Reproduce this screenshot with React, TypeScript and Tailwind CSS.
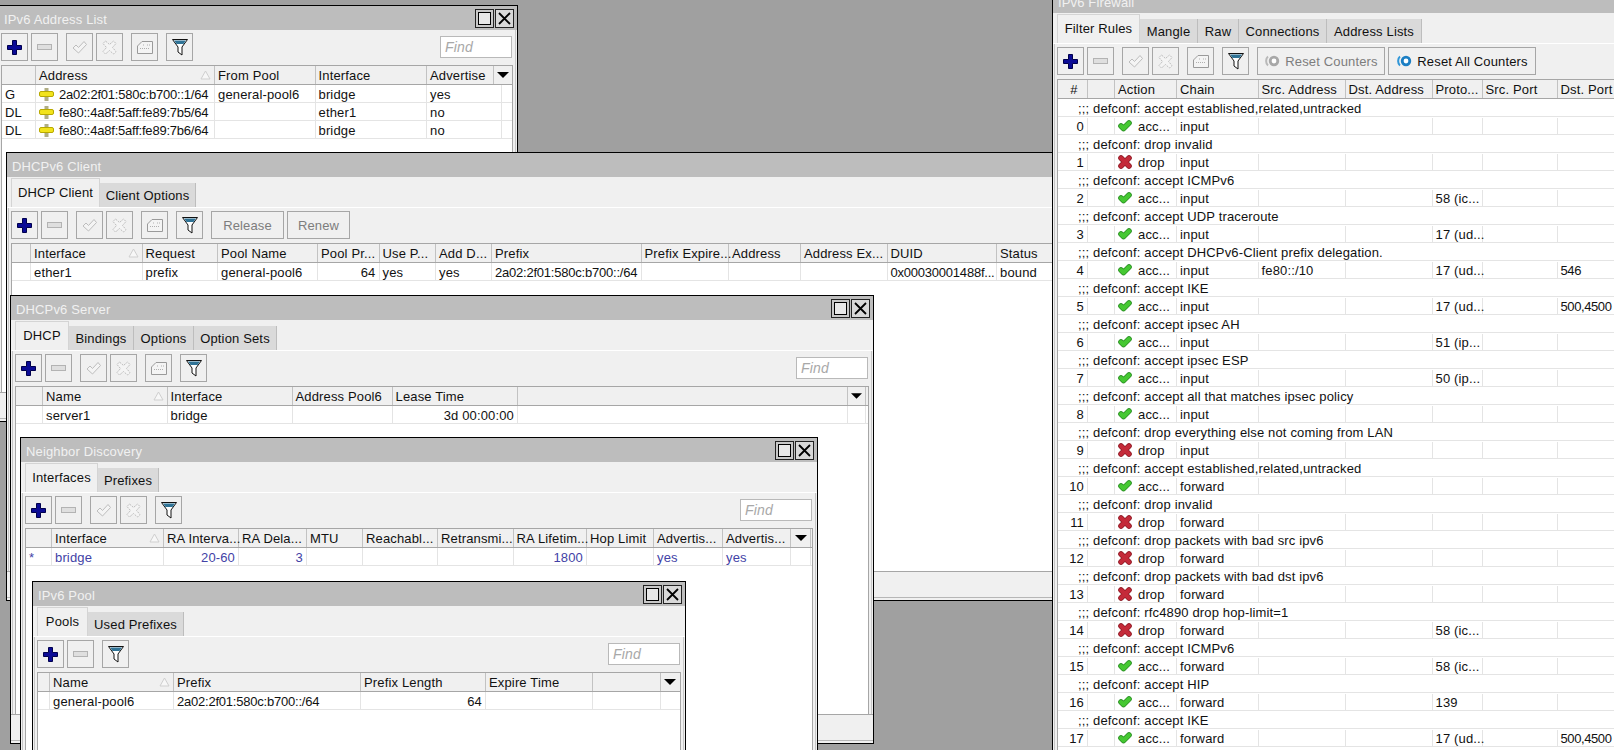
import type { ReactNode } from 'react';

type IconKind = 'add' | 'remove' | 'enable' | 'disable' | 'comment' | 'filter';

const Plus = () => (
  <svg width="15" height="15" viewBox="0 0 15 15">
    <path d="M5.500 .5h4v5h5v4h-5v5h-4v-5h-5v-4h5z" fill="#0b0b96" stroke="#00004e" />
  </svg>
);

const Minus = () => (
  <svg width="15" height="6" viewBox="0 0 15 6">
    <rect x=".5" y=".5" width="14" height="5" fill="#dfdfdf" stroke="#b3b3b3" />
  </svg>
);

const CheckOff = () => (
  <svg width="15" height="14" viewBox="0 0 15 14">
    <path d="M1 8l3-3 2.500 2.500L12 1.500l2.500 3L6.500 13z" fill="#f4f4f4" stroke="#bdbdbd" />
  </svg>
);

const CrossOff = () => (
  <svg width="15" height="15" viewBox="0 0 15 15">
    <path d="M3.500 1l4 3.500 4-3.500 2.500 2.500-3.500 4 3.500 4-2.500 2.500-4-3.500-4 3.500L1 11.500l3.500-4L1 3.500z" fill="#f4f4f4" stroke="#bdbdbd" strokeDasharray="2 1" />
  </svg>
);

const NoteOff = () => (
  <svg width="16" height="13" viewBox="0 0 16 13">
    <path d="M5 .5h10.500v12H.5V5z" fill="#f4f4f4" stroke="#9a9a9a" />
    <path d="M6 4h2M10 4h3M3 7.500h10" stroke="#b0b0b0" strokeDasharray="1 1" />
  </svg>
);

const Funnel = () => (
  <svg width="16" height="17" viewBox="0 0 16 17">
    <path d="M.5 .5h15L10 8v8l-4-3V8z" fill="#fff" stroke="#111" />
    <path d="M2 1.500h12L11.500 5h-7z" fill="#2f7396" />
  </svg>
);

const GreenCheck = () => (
  <svg width="14" height="12" viewBox="0 0 14 12" className="shrink-0">
    <path d="M3 6L5.500 8.500 11 3" fill="none" stroke="#2b8f24" strokeWidth="5.600" strokeLinecap="round" strokeLinejoin="round" />
    <path d="M3 6L5.500 8.500 11 3" fill="none" stroke="#45c832" strokeWidth="4" strokeLinecap="round" strokeLinejoin="round" />
  </svg>
);

const RedCross = () => (
  <svg width="14" height="14" viewBox="0 0 14 14" className="shrink-0">
    <path d="M3 3L11 11M11 3L3 11" fill="none" stroke="#8f1a25" strokeWidth="5.600" strokeLinecap="round" />
    <path d="M3 3L11 11M11 3L3 11" fill="none" stroke="#c42a39" strokeWidth="4" strokeLinecap="round" />
  </svg>
);

const AddressPin = () => (
  <svg width="15" height="13" viewBox="0 0 15 13" className="shrink-0">
    <rect x="5.500" y="0" width="4" height="13" fill="#b0ae84" />
    <rect x=".5" y="3.500" width="14" height="5" rx="1.500" fill="#f2e31b" stroke="#b8a900" />
  </svg>
);

const SortUp = () => (
  <svg width="11" height="10" viewBox="0 0 11 10" className="absolute right-[3px] top-[4px]">
    <path d="M5.500 1L1 9h9z" fill="#f7f7f7" stroke="#cfcfcf" />
  </svg>
);

const DropArrow = () => (
  <svg width="12" height="6" viewBox="0 0 12 6">
    <path d="M0 0h12L6 6z" fill="#000" />
  </svg>
);

function ResetIcon({ off }: { off?: boolean }) {
  const c = off ? '#a8a8a8' : '#1c7fc4';
  return (
    <svg width="16" height="12" viewBox="0 0 16 12" className="shrink-0">
      <path d="M4 1.500C1.500 3.500 1.500 8.500 4 10.500" fill="none" stroke={off ? '#b8b8b8' : '#2f96d8'} strokeWidth="2" />
      <circle cx="10" cy="6" r="3.800" fill="#fff" stroke={c} strokeWidth="2.800" />
    </svg>
  );
}

function ToolBtn({ kind }: { kind: IconKind }) {
  const ml = kind === 'enable' || kind === 'comment' || kind === 'filter' ? 'ml-[5px]' : '';
  return (
    <div className={`flex h-[28px] w-[27px] items-center justify-center border border-[#a6a6a6] bg-[#f0f0f0] ${ml}`}>
      {kind === 'add' && <Plus />}
      {kind === 'remove' && <Minus />}
      {kind === 'enable' && <CheckOff />}
      {kind === 'disable' && <CrossOff />}
      {kind === 'comment' && <NoteOff />}
      {kind === 'filter' && <Funnel />}
    </div>
  );
}

function TextBtn({ className, off, icon, children }: { className: string; off?: boolean; icon?: ReactNode; children: ReactNode }) {
  return (
    <div className={`flex h-[28px] items-center justify-center gap-[5px] border border-[#a6a6a6] bg-[#f0f0f0] ${off ? 'text-[#7d7d7d]' : 'text-[#111]'} ${className}`}>
      {icon}
      {children}
    </div>
  );
}

const FindBox = () => (
  <div className="ml-auto mr-[1px] flex h-[22px] w-[72px] shrink-0 items-center border border-[#b9b9b9] bg-white pl-[4px] text-[14px] italic text-[#a8a8a8]">
    Find
  </div>
);

function Toolbar({ kinds, find, children }: { kinds: IconKind[]; find?: boolean; children?: ReactNode }) {
  return (
    <div className="flex h-[28px] shrink-0 items-center gap-[3px]">
      {kinds.map((k) => (
        <ToolBtn key={k} kind={k} />
      ))}
      {children}
      {find && <FindBox />}
    </div>
  );
}

type Tab = [string, string];

function Tabs({ tabs }: { tabs: Tab[] }) {
  return (
    <div className="mt-[2px] flex h-[29px] shrink-0 items-end border-b border-white pl-[4px]">
      {tabs.map(([t, w], i) =>
        i === 0 ? (
          <div key={t} className={`flex h-[29px] items-center justify-center whitespace-nowrap border-x border-t border-[#d4d4d4] bg-[#f0f0f0] pb-[2px] ${w}`}>
            {t}
          </div>
        ) : (
          <div key={t} className={`flex h-[24px] items-center justify-center whitespace-nowrap border-r border-[#bdbdbd] bg-[#dadada] ${w}`}>
            {t}
          </div>
        ),
      )}
    </div>
  );
}

function Win({ className, title, titlePad, tabs, children }: { className: string; title: string; titlePad?: string; tabs?: Tab[]; children: ReactNode }) {
  return (
    <div className={`absolute flex flex-col border border-black bg-[#f0f0f0] ${className}`}>
      <div className={`flex h-[24px] shrink-0 items-center justify-between bg-[#bdbdbd] pr-[3px] text-[#f1f1f1] ${titlePad ?? 'pl-[5px]'}`}>
        <span className="pt-[2px]">{title}</span>
        <div className="flex gap-[1px] pt-[1px]">
          <div className="flex h-[19px] w-[19px] items-center justify-center border border-[#222] bg-[#c8c8c8]">
            <div className="h-[13px] w-[13px] border border-black bg-[#e8e8e8]" />
          </div>
          <div className="flex h-[19px] w-[19px] items-center justify-center border border-[#222] bg-[#d8d8d8]">
            <svg width="13" height="13" viewBox="0 0 13 13">
              <path d="M1 1l11 11M12 1L1 12" stroke="#000" strokeWidth="1.800" />
            </svg>
          </div>
        </div>
      </div>
      {tabs && <Tabs tabs={tabs} />}
      <div className="mx-[1px] flex min-h-0 flex-1 flex-col border-x border-[#c6c6c6] px-[2px] pt-[3px]">{children}</div>
      <div className="h-[26px] shrink-0 border-t border-[#a6a6a6]" />
      <div className="h-[3px] shrink-0 border-t border-[#b6b6b6]" />
    </div>
  );
}

function Table({ cols, rowCols, head, rows, right = [], sortAt, arrow, tone = 'text-[#111]' }: { cols: string; rowCols?: string; head: string[]; rows: string[][]; right?: number[]; sortAt: number; arrow?: boolean; tone?: string }) {
  return (
    <div className="mt-[4px] min-h-0 flex-1 overflow-hidden border-x border-[#a6a6a6] bg-white">
      <div className={`grid h-[20px] border-y border-[#a6a6a6] bg-[#f0f0f0] ${cols}`}>
        {head.map((h, i) => (
          <div key={i} className="relative flex items-center whitespace-nowrap border-r border-[#c2c2c2] pl-[3px]">
            {h}
            {i === sortAt && <SortUp />}
            {arrow && i === head.length - 1 && (
              <div className="flex w-full justify-center pr-[3px]">
                <DropArrow />
              </div>
            )}
          </div>
        ))}
      </div>
      {rows.map((r, ri) => (
        <div key={ri} className={`grid h-[18px] border-b border-[#e4e4e4] ${rowCols ?? cols} ${tone}`}>
          {r.map((c, i) => {
            const tight = c.includes('::') || c.startsWith('0x');
            return (
              <div key={i} className={`flex items-center whitespace-nowrap border-r border-[#e4e4e4] px-[3px] pt-[1px] ${right.includes(i) ? 'justify-end' : ''} ${tight ? 'tracking-[-0.22px]' : ''}`}>
                {c.startsWith('PIN ') ? (
                  <span className="flex items-center gap-[5px]">
                    <AddressPin />
                    {c.slice(4)}
                  </span>
                ) : (
                  c
                )}
              </div>
            );
          })}
        </div>
      ))}
    </div>
  );
}

const fullBar: IconKind[] = ['add', 'remove', 'enable', 'disable', 'comment', 'filter'];

const fwCols = 'grid-cols-[30px_27px_62px_81.500px_87px_87px_50px_75px_60px]';

const rules: [string, 'acc...' | 'drop', string, string, string, string][] = [
  ['accept established,related,untracked', 'acc...', 'input', '', '', ''],
  ['drop invalid', 'drop', 'input', '', '', ''],
  ['accept ICMPv6', 'acc...', 'input', '', '58 (ic...', ''],
  ['accept UDP traceroute', 'acc...', 'input', '', '17 (ud...', ''],
  ['accept DHCPv6-Client prefix delegation.', 'acc...', 'input', 'fe80::/10', '17 (ud...', '546'],
  ['accept IKE', 'acc...', 'input', '', '17 (ud...', '500,4500'],
  ['accept ipsec AH', 'acc...', 'input', '', '51 (ip...', ''],
  ['accept ipsec ESP', 'acc...', 'input', '', '50 (ip...', ''],
  ['accept all that matches ipsec policy', 'acc...', 'input', '', '', ''],
  ['drop everything else not coming from LAN', 'drop', 'input', '', '', ''],
  ['accept established,related,untracked', 'acc...', 'forward', '', '', ''],
  ['drop invalid', 'drop', 'forward', '', '', ''],
  ['drop packets with bad src ipv6', 'drop', 'forward', '', '', ''],
  ['drop packets with bad dst ipv6', 'drop', 'forward', '', '', ''],
  ['rfc4890 drop hop-limit=1', 'drop', 'forward', '', '58 (ic...', ''],
  ['accept ICMPv6', 'acc...', 'forward', '', '58 (ic...', ''],
  ['accept HIP', 'acc...', 'forward', '', '139', ''],
  ['accept IKE', 'acc...', 'forward', '', '17 (ud...', '500,4500'],
];

function FirewallTable() {
  const head = ['#', '', 'Action', 'Chain', 'Src. Address', 'Dst. Address', 'Proto...', 'Src. Port', 'Dst. Port'];
  return (
    <div className="mt-[4px] min-h-0 flex-1 overflow-hidden border-x border-[#a6a6a6] bg-white">
      <div className={`grid h-[20px] border-y border-[#a6a6a6] bg-[#f0f0f0] ${fwCols}`}>
        {head.map((h, i) => (
          <div key={i} className={`flex items-center whitespace-nowrap border-r border-[#c2c2c2] pl-[3px] ${i === 0 ? 'justify-center' : ''}`}>
            {h}
          </div>
        ))}
      </div>
      {rules.map(([note, action, chain, src, proto, dport], i) => (
        <div key={i}>
          <div className="flex h-[18px] items-center whitespace-nowrap border-b border-[#e4e4e4] pl-[20px] pt-[1px] text-[#111]">;;; defconf: {note}</div>
          <div className={`grid h-[18px] border-b border-[#e4e4e4] pt-[1px] text-[#111] ${fwCols}`}>
            <div className="flex items-center justify-end border-r border-[#e4e4e4] pr-[3px]">{i}</div>
            <div className="border-r border-[#e4e4e4]" />
            <div className="flex items-center gap-[6px] border-r border-[#e4e4e4] pl-[3px]">
              {action === 'drop' ? <RedCross /> : <GreenCheck />}
              {action}
            </div>
            <div className="flex items-center border-r border-[#e4e4e4] pl-[3px]">{chain}</div>
            <div className="flex items-center border-r border-[#e4e4e4] pl-[3px]">{src}</div>
            <div className="border-r border-[#e4e4e4]" />
            <div className="flex items-center whitespace-nowrap border-r border-[#e4e4e4] pl-[3px]">{proto}</div>
            <div className="border-r border-[#e4e4e4]" />
            <div className="flex items-center whitespace-nowrap pl-[3px] tracking-[-0.4px]">{dport}</div>
          </div>
        </div>
      ))}
    </div>
  );
}

export default function App() {
  return (
    <div className="relative h-[750px] w-[1614px] overflow-hidden bg-[#a0a0a0] font-['Liberation_Sans',Arial,sans-serif] text-[13px] leading-none tracking-[0.15px] text-[#111]">
      <Win className="left-[-4px] top-[5px] h-[417px] w-[522px]" title="IPv6 Address List" titlePad="pl-[7px]">
        <Toolbar kinds={fullBar} find />
        <Table
          cols="grid-cols-[34px_179px_100.500px_111.500px_66.500px_19px]"
          rowCols="grid-cols-[34px_179px_100.500px_111.500px_75px_10.500px]"
          head={['', 'Address', 'From Pool', 'Interface', 'Advertise', '']}
          rows={[
            ['G', 'PIN 2a02:2f01:580c:b700::1/64', 'general-pool6', 'bridge', 'yes', ''],
            ['DL', 'PIN fe80::4a8f:5aff:fe89:7b5/64', '', 'ether1', 'no', ''],
            ['DL', 'PIN fe80::4a8f:5aff:fe89:7b6/64', '', 'bridge', 'no', ''],
          ]}
          sortAt={1}
          arrow
        />
      </Win>

      <Win className="left-[6px] top-[152px] h-[449px] w-[1120px]" title="DHCPv6 Client" tabs={[['DHCP Client', 'w-[89px]'], ['Client Options', 'w-[96px]']]}>
        <Toolbar kinds={fullBar}>
          <TextBtn className="ml-[5px] w-[73px]" off>Release</TextBtn>
          <TextBtn className="w-[63px]" off>Renew</TextBtn>
        </Toolbar>
        <Table
          cols="grid-cols-[19px_111.500px_75.500px_100px_61.500px_56.500px_56px_149.500px_87.500px_72px_86.500px_109.500px_120px]"
          head={['', 'Interface', 'Request', 'Pool Name', 'Pool Pr...', 'Use P...', 'Add D...', 'Prefix', 'Prefix Expire...', 'Address', 'Address Ex...', 'DUID', 'Status']}
          rows={[['', 'ether1', 'prefix', 'general-pool6', '64', 'yes', 'yes', '2a02:2f01:580c:b700::/64', '', '', '', '0x00030001488f...', 'bound']]}
          right={[4]}
          sortAt={1}
        />
      </Win>

      <Win className="left-[10px] top-[295px] h-[449px] w-[864px]" title="DHCPv6 Server" tabs={[['DHCP', 'w-[54px]'], ['Bindings', 'w-[65px]'], ['Options', 'w-[60px]'], ['Option Sets', 'w-[83px]']]}>
        <Toolbar kinds={fullBar} find />
        <Table
          cols="grid-cols-[27px_124.500px_125px_100px_125.500px_330px_18px]"
          head={['', 'Name', 'Interface', 'Address Pool6', 'Lease Time', '', '']}
          rows={[['', 'server1', 'bridge', '', '3d 00:00:00', '', '']]}
          right={[4]}
          sortAt={1}
          arrow
        />
      </Win>

      <Win className="left-[20px] top-[437px] h-[400px] w-[798px]" title="Neighbor Discovery" tabs={[['Interfaces', 'w-[73px]'], ['Prefixes', 'w-[61px]']]}>
        <Toolbar kinds={['add', 'remove', 'enable', 'disable', 'filter']} find />
        <Table
          cols="grid-cols-[26px_112px_75px_68px_56px_75px_75.500px_73.500px_67px_69px_68px_20px]"
          head={['', 'Interface', 'RA Interva...', 'RA Dela...', 'MTU', 'Reachabl...', 'Retransmi...', 'RA Lifetim...', 'Hop Limit', 'Advertis...', 'Advertis...', '']}
          rows={[['*', 'bridge', '20-60', '3', '', '', '', '1800', '', 'yes', 'yes', '']]}
          right={[2, 3, 7]}
          sortAt={1}
          arrow
          tone="text-[#4242a6]"
        />
      </Win>

      <Win className="left-[32px] top-[581px] h-[300px] w-[654px]" title="IPv6 Pool" tabs={[['Pools', 'w-[51px]'], ['Used Prefixes', 'w-[96px]']]}>
        <Toolbar kinds={['add', 'remove', 'filter']} find />
        <Table
          cols="grid-cols-[12px_124px_187px_125px_106.500px_68px_20px]"
          head={['', 'Name', 'Prefix', 'Prefix Length', 'Expire Time', '', '']}
          rows={[['', 'general-pool6', '2a02:2f01:580c:b700::/64', '64', '', '', '']]}
          right={[3]}
          sortAt={1}
          arrow
        />
      </Win>

      <Win className="left-[1052px] top-[-12px] h-[900px] w-[640px]" title="IPv6 Firewall" tabs={[['Filter Rules', 'w-[83px]'], ['Mangle', 'w-[58px]'], ['Raw', 'w-[41px]'], ['Connections', 'w-[88px]'], ['Address Lists', 'w-[95px]']]}>
        <Toolbar kinds={fullBar}>
          <TextBtn className="ml-[5px] w-[128px]" off icon={<ResetIcon off />}>Reset Counters</TextBtn>
          <TextBtn className="w-[148px]" icon={<ResetIcon />}>Reset All Counters</TextBtn>
        </Toolbar>
        <FirewallTable />
      </Win>
    </div>
  );
}
